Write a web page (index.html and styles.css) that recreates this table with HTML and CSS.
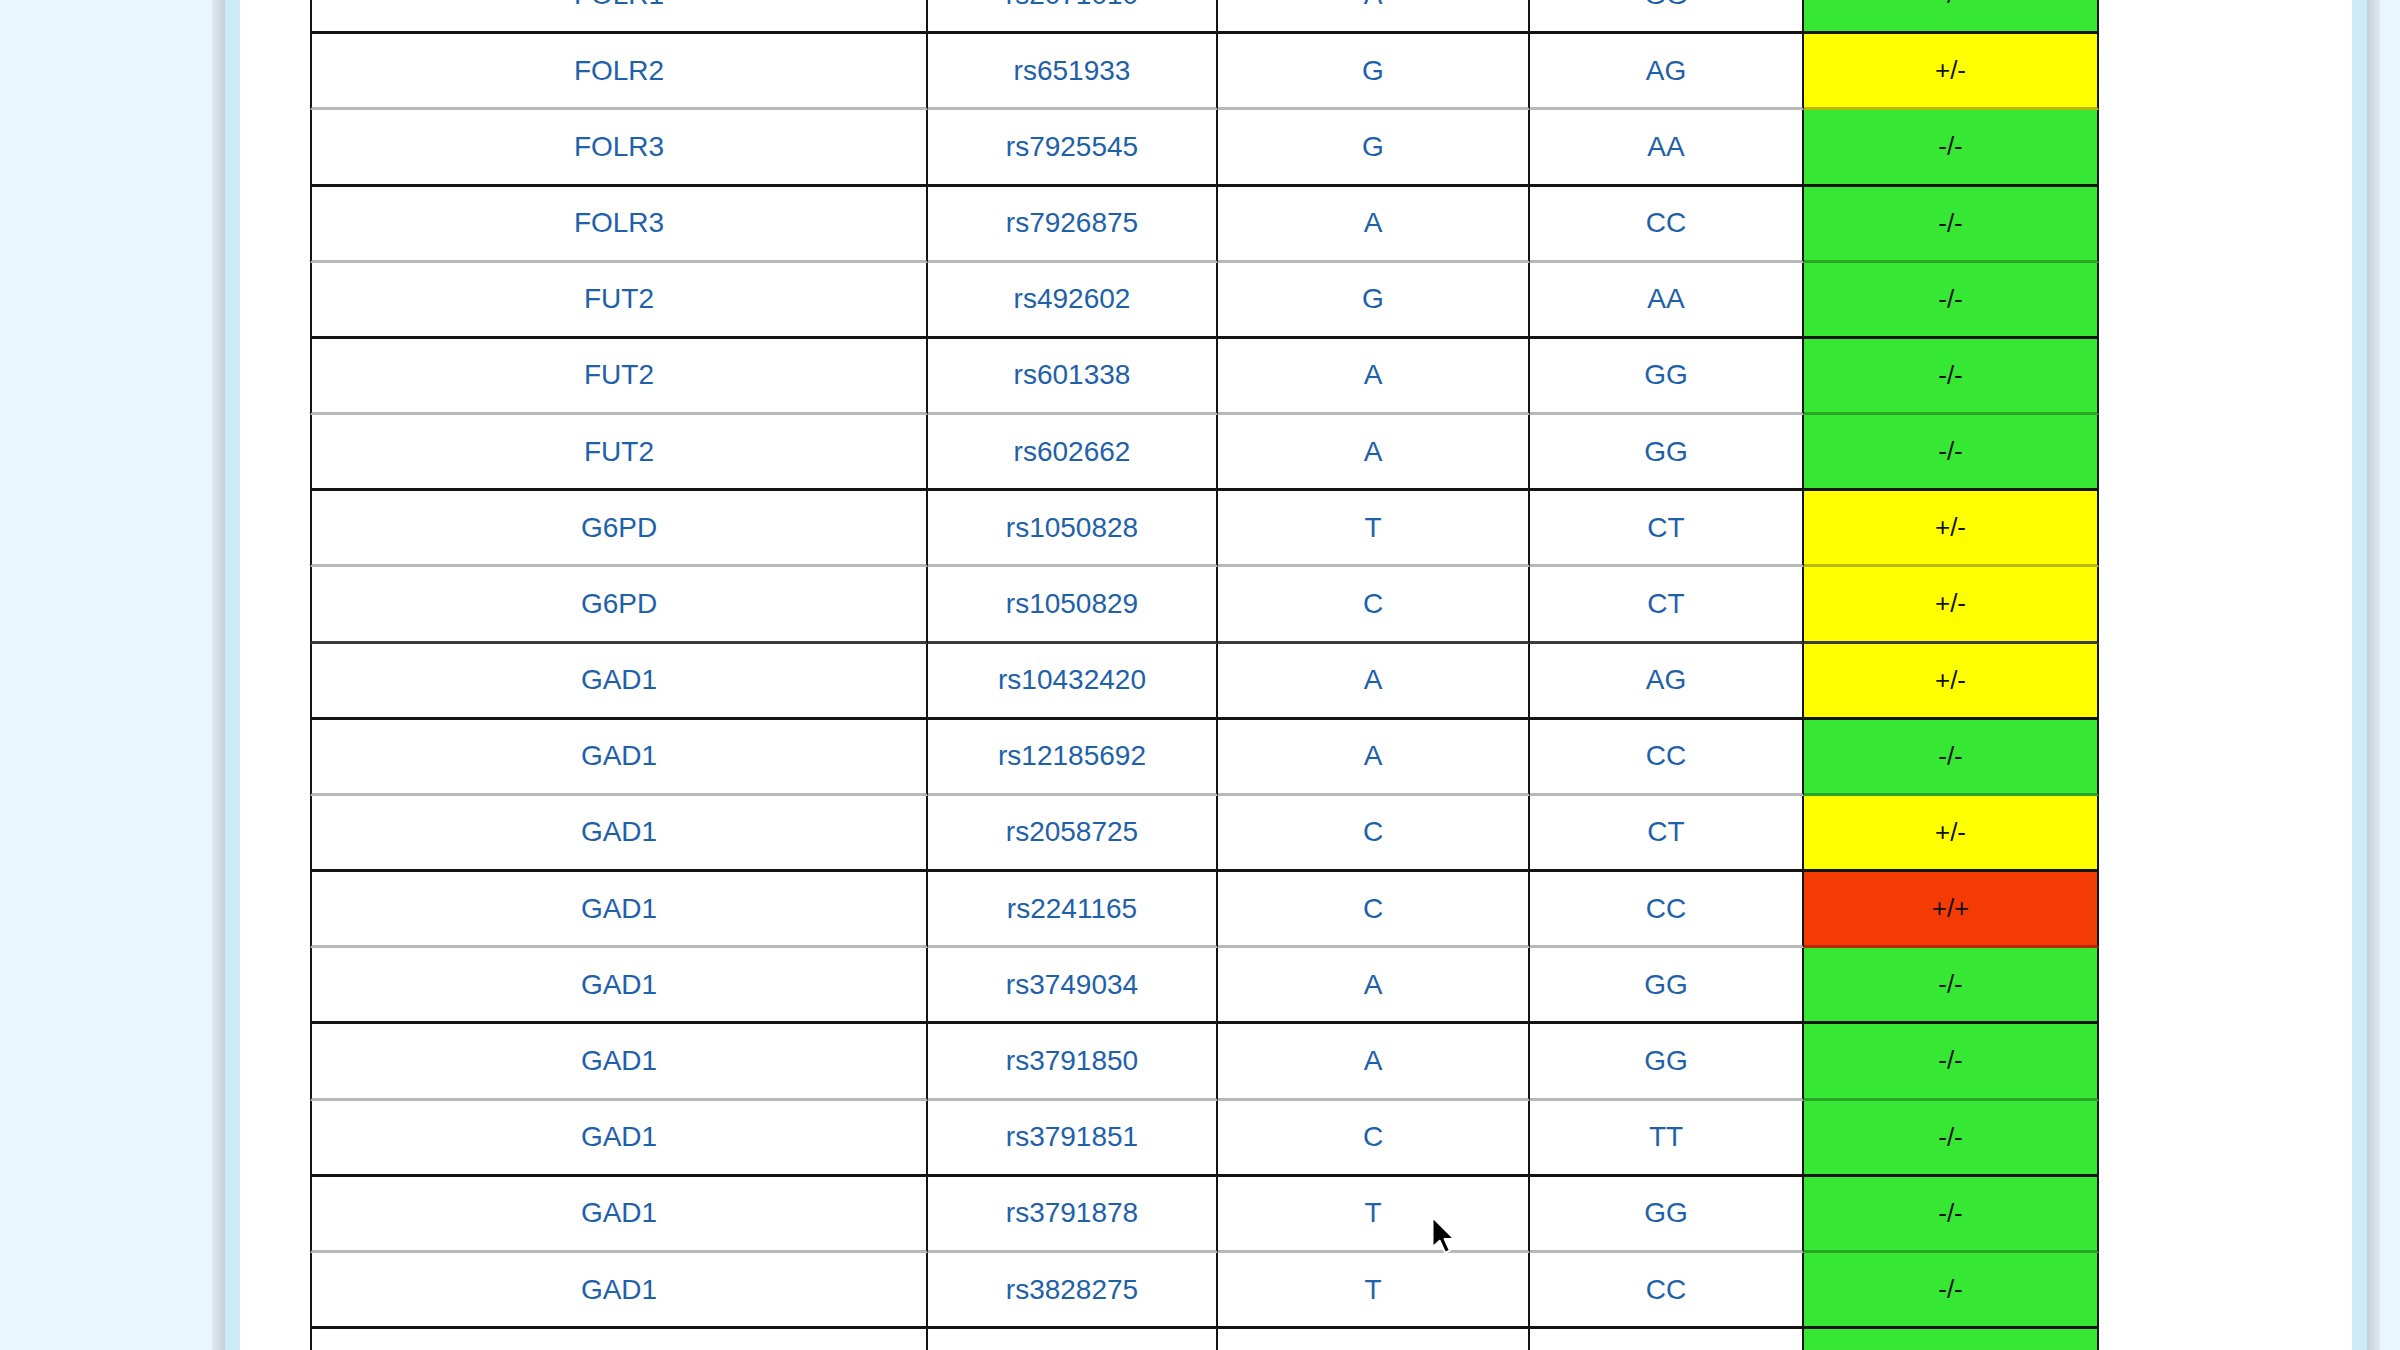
FILE: index.html
```html
<!DOCTYPE html>
<html lang="en">
<head>
<meta charset="utf-8">
<title>Genotype table</title>
<link rel="stylesheet" href="styles.css">
</head>
<body>
<div class="frame">
  <main class="panel">
    <table class="snps">
      <colgroup>
        <col class="c-gene"><col class="c-rs"><col class="c-allele"><col class="c-geno"><col class="c-status">
      </colgroup>
      <tbody>
        <tr class="dark"><td>FOLR1</td><td>rs2071010</td><td>A</td><td>GG</td><td class="st neg">-/-</td></tr>
        <tr class="light"><td>FOLR2</td><td>rs651933</td><td>G</td><td>AG</td><td class="st het">+/-</td></tr>
        <tr class="dark"><td>FOLR3</td><td>rs7925545</td><td>G</td><td>AA</td><td class="st neg">-/-</td></tr>
        <tr class="light"><td>FOLR3</td><td>rs7926875</td><td>A</td><td>CC</td><td class="st neg">-/-</td></tr>
        <tr class="dark"><td>FUT2</td><td>rs492602</td><td>G</td><td>AA</td><td class="st neg">-/-</td></tr>
        <tr class="light"><td>FUT2</td><td>rs601338</td><td>A</td><td>GG</td><td class="st neg">-/-</td></tr>
        <tr class="dark"><td>FUT2</td><td>rs602662</td><td>A</td><td>GG</td><td class="st neg">-/-</td></tr>
        <tr class="light"><td>G6PD</td><td>rs1050828</td><td>T</td><td>CT</td><td class="st het">+/-</td></tr>
        <tr class="mid"><td>G6PD</td><td>rs1050829</td><td>C</td><td>CT</td><td class="st het">+/-</td></tr>
        <tr class="dark"><td>GAD1</td><td>rs10432420</td><td>A</td><td>AG</td><td class="st het">+/-</td></tr>
        <tr class="light"><td>GAD1</td><td>rs12185692</td><td>A</td><td>CC</td><td class="st neg">-/-</td></tr>
        <tr class="dark"><td>GAD1</td><td>rs2058725</td><td>C</td><td>CT</td><td class="st het">+/-</td></tr>
        <tr class="light"><td>GAD1</td><td>rs2241165</td><td>C</td><td>CC</td><td class="st hom">+/+</td></tr>
        <tr class="dark"><td>GAD1</td><td>rs3749034</td><td>A</td><td>GG</td><td class="st neg">-/-</td></tr>
        <tr class="light"><td>GAD1</td><td>rs3791850</td><td>A</td><td>GG</td><td class="st neg">-/-</td></tr>
        <tr class="dark"><td>GAD1</td><td>rs3791851</td><td>C</td><td>TT</td><td class="st neg">-/-</td></tr>
        <tr class="light"><td>GAD1</td><td>rs3791878</td><td>T</td><td>GG</td><td class="st neg">-/-</td></tr>
        <tr class="dark"><td>GAD1</td><td>rs3828275</td><td>T</td><td>CC</td><td class="st neg">-/-</td></tr>
        <tr class="light"><td>GAD1</td><td>rs4147778</td><td>A</td><td>GG</td><td class="st neg">-/-</td></tr>
      </tbody>
    </table>
  </main>
</div>
<svg class="cursor" width="29" height="43" viewBox="0 0 24 36" aria-hidden="true">
  <path d="M2 2 L2 27 L8 21.5 L12.5 31.5 L16.5 29.8 L12 20 L20 20 Z" fill="#000" stroke="#fff" stroke-width="1.6" stroke-linejoin="round"/>
</svg>
</body>
</html>
```

FILE: styles.css
```css
html, body {
  margin: 0;
  padding: 0;
}

body {
  width: 2400px;
  height: 1350px;
  overflow: hidden;
  background: #e9f6fd;
  font-family: "Liberation Sans", Arial, Helvetica, sans-serif;
  position: relative;
}

.frame {
  margin-left: 212px;
  width: 2168px;
  height: 1350px;
  box-sizing: border-box;
  padding: 0 13px;
  background: linear-gradient(90deg,
    #e2eaef 0, #c3ced6 13px, transparent 13px,
    transparent calc(100% - 13px), #c3ced6 calc(100% - 13px), #e2eaef 100%);
}

.panel {
  height: 100%;
  box-sizing: border-box;
  background: #ffffff;
  border-left: 15px solid #cdeaf9;
  border-right: 15px solid #cdeaf9;
  padding-left: 70px;
  overflow: hidden;
}

.snps {
  margin-top: -42px;
  table-layout: fixed;
  border-collapse: separate;
  border-spacing: 0;
  width: 1789px;
}

.c-gene { width: 618px; }
.c-rs { width: 290px; }
.c-allele { width: 312px; }
.c-geno { width: 274px; }
.c-status { width: 295px; }

.snps td {
  box-sizing: border-box;
  height: 76.18px;
  padding: 0;
  text-align: center;
  vertical-align: middle;
  font-size: 28px;
  color: #1e61ab;
  border-right: 2px solid #141414;
  background-clip: border-box;
}

.snps td:first-child {
  border-left: 2px solid #141414;
}

.dark td { border-bottom: 3px solid #141414; }
.mid td { border-bottom: 3px solid #3c3c3c; }
.light td { border-bottom: 3px solid rgba(0, 0, 0, 0.28); }

.snps td.st {
  color: #111111;
  font-size: 26px;
}

.st.neg { background: #36e834; }
.st.het { background: #ffff00; }
.st.hom { background: #f53b04; }

.cursor {
  position: absolute;
  left: 1430px;
  top: 1215px;
}
```
